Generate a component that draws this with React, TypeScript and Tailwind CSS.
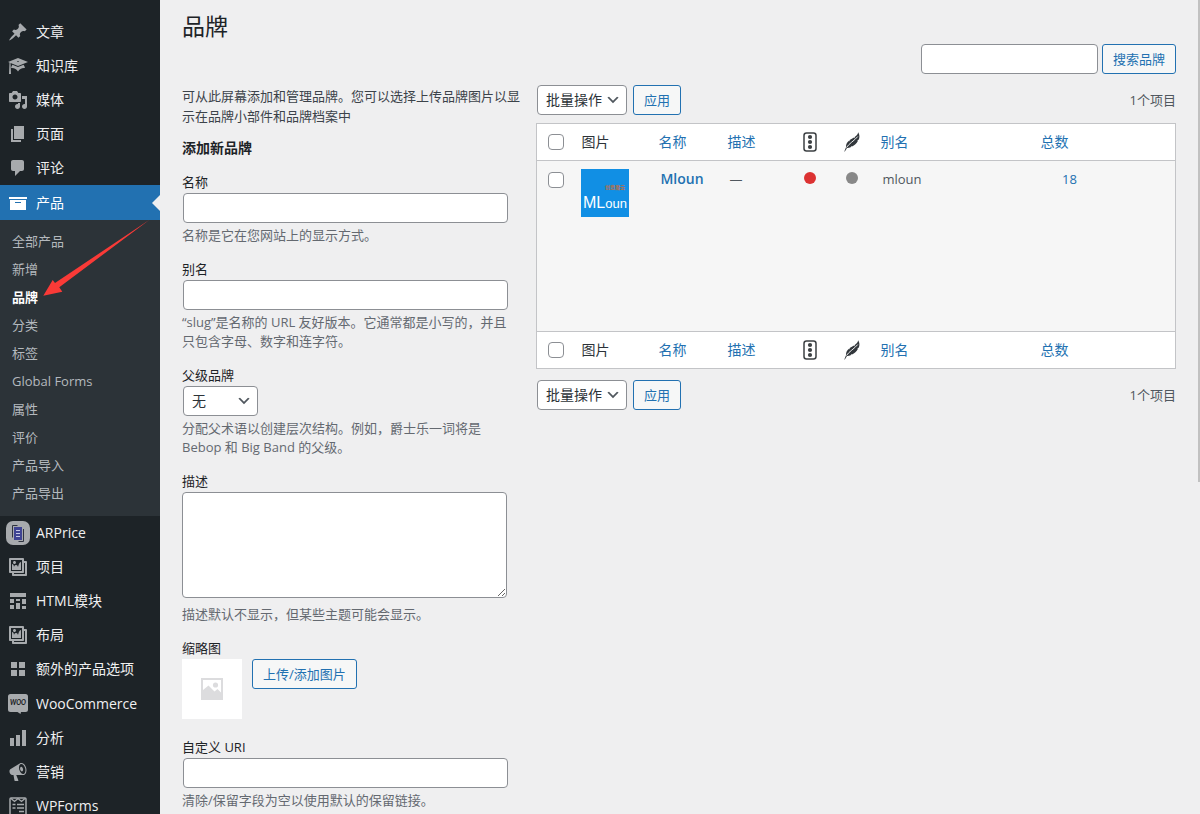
import React from "react";

const FONT = "font-['Open_Sans','Noto_Sans_CJK_SC',sans-serif]";

type Glyph = { d: string };

const Dash = ({ d }: Glyph) => (
  <svg viewBox="0 0 20 20" className="size-5 fill-current" aria-hidden="true">
    <path d={d} fillRule="evenodd" />
  </svg>
);

const GALLERY =
  "M16 4h1.96c.57 0 1.04.47 1.04 1.04v12.92c0 .57-.47 1.04-1.04 1.04H5.04C4.47 19 4 18.53 4 17.96V16H2.04C1.47 16 1 15.53 1 14.96V2.04C1 1.47 1.47 1 2.04 1h12.92c.57 0 1.04.47 1.04 1.04V4zM3 14h11V3H3v11zm5-8.5C8 4.67 7.33 4 6.5 4S5 4.67 5 5.5 5.67 7 6.5 7 8 6.33 8 5.5zm2 4.5s1-5 3-5v8H4V7c2 0 2 3 2 3s.33-2 2-2 2 2 2 2zm7 7V6h-1v8.960c0 .57-.47 1.04-1.04 1.04H6v1h11z";

const ArPriceIcon = () => (
  <svg viewBox="0 0 24 24" className="size-6" aria-hidden="true">
    <rect width="24" height="24" rx="7" fill="#a7aaad" />
    <path d="M6.500 16.500V4.500h5M17.500 8v12.500h-5" fill="none" stroke="#2f3440" strokeWidth="1" />
    <rect x="8" y="6" width="8" height="13" fill="#3f4493" />
    <path d="M10 9.500h4M10 12.500h4M10 15.500h4" stroke="#c5c8e6" strokeWidth="1" />
  </svg>
);

const WooIcon = () => (
  <svg viewBox="0 0 20 20" className="size-5" aria-hidden="true">
    <path d="M2.500 0h15A2.500 2.500 0 0 1 20 2.500v13a2.500 2.500 0 0 1-2.500 2.500H13l-.5 2-3-2h-7A2.500 2.500 0 0 1 0 15.500v-13A2.500 2.500 0 0 1 2.500 0z" fill="#a7aaad" />
    <text x="10" y="11" textAnchor="middle" fontSize="6.500" fontWeight="900" fontStyle="italic" fill="#1d2327" fontFamily="Lato, sans-serif">
      WOO
    </text>
  </svg>
);

const WpFormsIcon = () => (
  <svg viewBox="0 0 20 20" className="size-5" fill="none" stroke="currentColor" aria-hidden="true">
    <rect x="2" y="2" width="16" height="17" rx="1" strokeWidth="1.500" />
    <path d="M3 2.500l3.500 3L10 2.500l3.500 3 3.500-3" strokeWidth="1.300" />
    <path d="M4.500 8.500h3M9 8.500h7M4.500 12h3M9 12h7M11 15.500h5" strokeWidth="1.500" />
  </svg>
);

type Item = { label: string; icon: React.ReactNode };

const topItems: Item[] = [
  {
    label: "文章",
    icon: (
      <Dash d="M10.44 3.02l1.82-1.82 6.36 6.35-1.83 1.82c-1.05-.68-2.48-.57-3.41.36l-.75.75c-.92.93-1.04 2.35-.35 3.41l-1.83 1.82-2.41-2.41-2.8 2.79c-.42.42-3.38 2.71-3.8 2.29s1.86-3.39 2.28-3.81l2.79-2.79L4.1 9.36l1.83-1.82c1.05.69 2.48.57 3.4-.36l.75-.75c.93-.92 1.05-2.35.36-3.41z" />
    ),
  },
  {
    label: "知识库",
    icon: (
      <Dash d="M10 10L2.54 7.02 3 18H1l.48-11.41L0 6l10-4 10 4zm0-5c-.55 0-1 .22-1 .5s.45.5 1 .5 1-.22 1-.5-.45-.5-1-.5zm0 6l5.57-2.23c.71.94 1.2 2.07 1.36 3.3-.3-.04-.61-.07-.93-.07-2.55 0-4.78 1.37-6 3.41C8.78 13.37 6.55 12 4 12c-.32 0-.63.03-.93.07.16-1.23.65-2.36 1.36-3.3z" />
    ),
  },
  {
    label: "媒体",
    icon: (
      <Dash d="M13 11V4c0-.55-.45-1-1-1h-1.67L9 1H5L3.67 3H2c-.55 0-1 .45-1 1v7c0 .55.45 1 1 1h10c.55 0 1-.45 1-1zM7 4.5c1.38 0 2.5 1.12 2.5 2.5S8.38 9.5 7 9.5 4.5 8.38 4.5 7 5.62 4.5 7 4.5zM14 6h5v10.5c0 1.38-1.12 2.5-2.5 2.5S14 17.88 14 16.5s1.12-2.5 2.5-2.5c.17 0 .34.02.5.05V9h-3V6zm-4 8.05V13h2v3.5c0 1.38-1.12 2.5-2.5 2.5S7 17.88 7 16.5 8.12 14 9.5 14c.17 0 .34.02.5.05z" />
    ),
  },
  { label: "页面", icon: <Dash d="M6 15V2h10v13H6zm-1 1h8v2H3V5h2v11z" /> },
  {
    label: "评论",
    icon: <Dash d="M5 2h9c1.1 0 2 .9 2 2v7c0 1.1-.9 2-2 2h-2l-5 5v-5H5c-1.1 0-2-.9-2-2V4c0-1.1.9-2 2-2z" />,
  },
];

const subItems = ["全部产品", "新增", "品牌", "分类", "标签", "Global Forms", "属性", "评价", "产品导入", "产品导出"];

const pluginItems: Item[] = [
  { label: "ARPrice", icon: <ArPriceIcon /> },
  { label: "项目", icon: <Dash d={GALLERY} /> },
  {
    label: "HTML模块",
    icon: (
      <Dash d="M2 2h16v4H2V2zm0 10V8h4v4H2zm6-2V8h4v2H8zm6 3V8h4v5h-4zm-6 5v-6h4v6H8zm-6 0v-4h4v4H2zm12 0v-3h4v3h-4z" />
    ),
  },
  { label: "布局", icon: <Dash d={GALLERY} /> },
  { label: "额外的产品选项", icon: <Dash d="M3 3h6v6H3zM11 3h6v6h-6zM3 11h6v6H3zM11 11h6v6h-6z" /> },
];

const shopItems: Item[] = [
  { label: "WooCommerce", icon: <WooIcon /> },
  { label: "分析", icon: <Dash d="M18 18V2h-4v16h4zm-6 0V7H8v11h4zm-6 0v-8H2v8h4z" /> },
  {
    label: "营销",
    icon: (
      <Dash d="M18.15 5.94c.46 1.62.38 3.22-.02 4.48-.42 1.28-1.26 2.18-2.3 2.48-.16.06-.26.06-.4.06-.06.02-.12.02-.18.02-.06.02-.14.02-.22.02h-6.8l2.22 5.5c.02.14-.06.26-.14.34-.08.1-.24.16-.34.16H6.95c-.1 0-.26-.06-.34-.16-.08-.08-.16-.2-.14-.34l-1-5.5H4.25l-.02-.02c-.5.06-1.08-.18-1.54-.62s-.88-1.08-1.06-1.88c-.24-.8-.2-1.56-.02-2.2.18-.62.58-1.08 1.06-1.3l.02-.02 9-5.4c.1-.06.18-.1.24-.16.06-.04.14-.08.24-.12.16-.08.28-.12.5-.18 1.04-.3 2.24.1 3.22.98s1.84 2.24 2.26 3.86zm-2.58 5.98h-.02c.4-.1.74-.34 1.04-.7.58-.7.86-1.76.86-3.04 0-.64-.1-1.3-.28-1.98-.34-1.36-1.02-2.5-1.78-3.24s-1.68-1.1-2.46-.88c-.82.22-1.4.96-1.7 2-.32 1.04-.28 2.36.06 3.72.38 1.36 1 2.5 1.8 3.24.78.74 1.62 1.1 2.48.88zm-2.54-7.08c.22-.04.42-.02.62.04.38.16.76.48 1.02 1s.42 1.2.42 1.78c0 .3-.04.56-.12.8-.18.48-.44.84-.86.94-.34.1-.8-.06-1.14-.4s-.64-.86-.78-1.5c-.18-.62-.12-1.24.02-1.72s.48-.84.82-.94z" />
    ),
  },
  { label: "WPForms", icon: <WpFormsIcon /> },
];

const MenuGroup = ({ items }: { items: Item[] }) => (
  <ul>
    {items.map((it) => (
      <li key={it.label}>
        <a href="#" className="flex h-[34px] items-center text-sm text-[#f0f0f1]">
          <span className="flex w-9 shrink-0 items-center justify-center text-[#a7aaad]">{it.icon}</span>
          {it.label}
        </a>
      </li>
    ))}
  </ul>
);

const Sidebar = () => (
  <nav aria-label="主菜单" className="relative w-40 shrink-0 bg-[#1d2327] pt-[15px]">
    <MenuGroup items={topItems} />
    <a href="#" className="relative flex h-[35px] items-center bg-[#2271b1] text-sm text-white">
      <span className="flex w-9 shrink-0 justify-center">
        <Dash d="M19 4v2H1V4h18zM2 7h16v10H2V7zm11 3V9H7v1h6z" />
      </span>
      产品
      <span className="absolute top-1/2 right-0 -translate-y-1/2 border-y-8 border-r-8 border-y-transparent border-r-[#efeff0]" />
    </a>
    <ul className="bg-[#2c3338] pt-[7px] pb-[9px]">
      {subItems.map((s) => (
        <li key={s}>
          <a
            href="#"
            className={
              s === "品牌"
                ? "flex h-7 items-center px-3 text-[13px] font-bold text-white"
                : "flex h-7 items-center px-3 text-[13px] text-[#b4b9be]"
            }
          >
            {s}
          </a>
        </li>
      ))}
    </ul>
    <div className="flex flex-col gap-px">
      <MenuGroup items={pluginItems} />
      <MenuGroup items={shopItems} />
    </div>
    <svg viewBox="0 0 112 80" className="pointer-events-none absolute top-[219px] left-[42px] h-20 w-28" aria-hidden="true">
      <path d="M107.500.7L13 64l-2.300-3L1.300 76.700l19-4-3-4.400z" fill="#f93a37" />
    </svg>
  </nav>
);

const Chevron = () => (
  <svg viewBox="0 0 20 20" className="pointer-events-none absolute top-1/2 right-1.5 size-4 -translate-y-1/2" aria-hidden="true">
    <path d="M5 6l5 5 5-5 2 1-7 7-7-7 2-1z" fill="#50575e" />
  </svg>
);

const inputCls = "h-[30px] rounded border border-[#8c8f94] bg-white px-2 text-sm text-[#2c3338]";
const buttonCls =
  "h-[30px] rounded-[3px] border border-[#2271b1] bg-[#f6f7f7] px-2.5 text-[13px] whitespace-nowrap text-[#2271b1]";
const selectCls =
  "h-[30px] w-full appearance-none rounded border border-[#8c8f94] bg-white pr-6 pl-2 text-sm text-[#2c3338]";
const checkCls = "block size-4 appearance-none rounded border border-[#8c8f94] bg-white";

const Field = ({ id, label, help, children }: { id: string; label: string; help?: string; children: React.ReactNode }) => (
  <div>
    <label htmlFor={id} className="block leading-[22px] text-[#1d2327]">
      {label}
    </label>
    {children}
    {help && <p className="w-[96%] pt-[3px] leading-[19px] text-[#646970]">{help}</p>}
  </div>
);

const BulkBar = ({ id }: { id: string }) => (
  <div className="flex items-center gap-1.5 pl-px">
    <div className="relative w-[90px]">
      <select id={id} aria-label="选择批量操作" className={selectCls}>
        <option>批量操作</option>
      </select>
      <Chevron />
    </div>
    <button className={buttonCls}>应用</button>
    <span className="ml-auto text-[#50575e]">1个项目</span>
  </div>
);

const HandleIcon = () => (
  <svg viewBox="0 0 14 20" className="mx-auto h-5 w-3.5" aria-label="SEO" role="img">
    <rect x="1" y="1" width="12" height="18" rx="2.500" fill="none" stroke="#3c4043" strokeWidth="1.500" />
    <circle cx="7" cy="5" r="2.100" fill="#3c4043" />
    <circle cx="7" cy="10" r="2.100" fill="#3c4043" />
    <circle cx="7" cy="15" r="2.100" fill="#3c4043" />
  </svg>
);

const FeatherIcon = () => (
  <svg viewBox="0 0 16 20" className="mx-auto h-5 w-4" aria-label="可读性" role="img">
    <path d="M14.200.3C15.800 3 15.700 5.500 14.700 7.700L13.200 8.200l.8.600C12.500 11.500 10.500 13.500 8 14.500L6.800 14.100l.4.900C5.800 15.600 4.300 15.900 3 16L.7 19.700.4 19.300 2 15.200C1.800 12.500 3 10.200 5 8.700l.5.900.2-1.500L10 5.500l.6.900.1-1.400C12.500 3.800 13.800 2.300 14.200.3z" fill="#32373c" />
    <path d="M2.500 15.500C5 11.500 10 9 13.800 4.500" fill="none" stroke="#fff" strokeWidth=".9" />
  </svg>
);

const HeaderRow = ({ id }: { id: string }) => (
  <tr className="h-[37px] bg-white text-left text-sm">
    <th className="pl-[11px]">
      <input id={id} type="checkbox" aria-label="全选" className={checkCls} />
    </th>
    <th className="px-2.5 font-normal text-[#2c3338]">图片</th>
    <th className="px-2 font-normal"><a href="#" className="text-[#2271b1]">名称</a></th>
    <th className="px-2 font-normal"><a href="#" className="text-[#2271b1]">描述</a></th>
    <th><HandleIcon /></th>
    <th><FeatherIcon /></th>
    <th className="px-2 font-normal"><a href="#" className="text-[#2271b1]">别名</a></th>
    <th className="px-2 font-normal"><a href="#" className="text-[#2271b1]">总数</a></th>
    <th />
  </tr>
);

const BrandLogo = () => (
  <svg viewBox="0 0 48 48" className="size-12" role="img" aria-label="MLoun">
    <rect width="48" height="48" fill="#118fe4" />
    <text x="24" y="20" fontSize="5" fontWeight="700" fill="#b5704a" fontFamily="Noto Sans CJK SC, sans-serif">创意魔云</text>
    <text x="2" y="39" fontSize="16" fill="#fff" fontFamily="Liberation Sans, sans-serif">
      ML<tspan fontSize="13">oun</tspan>
    </text>
  </svg>
);

const BrandTable = () => (
  <table className="mt-2 mb-[11px] w-full table-fixed border border-[#c3c4c7] bg-[#f6f6f6]">
    <colgroup>
      <col className="w-[35px]" />
      <col className="w-[79px]" />
      <col className="w-[69px]" />
      <col className="w-[70px]" />
      <col className="w-[42px]" />
      <col className="w-[41px]" />
      <col />
      <col className="w-[74px]" />
      <col className="w-[69px]" />
    </colgroup>
    <thead className="border-b border-[#c3c4c7]">
      <HeaderRow id="all-top" />
    </thead>
    <tbody>
      <tr className="h-[171px] align-top text-[#50575e]">
        <td className="pt-[11px] pl-[11px]">
          <input type="checkbox" aria-label="选择 Mloun" className={checkCls} />
        </td>
        <td className="px-2.5 pt-2"><BrandLogo /></td>
        <td className="px-2.5 pt-2 text-sm font-semibold"><a href="#" className="text-[#2271b1]">Mloun</a></td>
        <td className="px-2.5 pt-2">—</td>
        <td className="pt-[11px]"><span className="mx-auto block size-3 rounded-full bg-[#dc3232]" /></td>
        <td className="pt-[11px]"><span className="mx-auto block size-3 rounded-full bg-[#888]" /></td>
        <td className="px-2.5 pt-2">mloun</td>
        <td className="pt-2 text-center"><a href="#" className="text-[#2271b1]">18</a></td>
        <td />
      </tr>
    </tbody>
    <tfoot className="border-t border-[#c3c4c7]">
      <HeaderRow id="all-bottom" />
    </tfoot>
  </table>
);

const AddForm = () => (
  <div className="w-[35%] shrink-0 pt-px pr-1.5">
    <p className="leading-5 text-[#3c434a]">可从此屏幕添加和管理品牌。您可以选择上传品牌图片以显示在品牌小部件和品牌档案中</p>
    <h2 className="pt-3 text-sm leading-5 font-semibold text-[#1d2327]">添加新品牌</h2>
    <form className="flex flex-col gap-[13px] pt-[13px]">
      <Field id="name" label="名称" help="名称是它在您网站上的显示方式。">
        <input id="name" type="text" className={`${inputCls} mx-px block w-[95%]`} />
      </Field>
      <Field id="slug" label="别名" help="“slug”是名称的 URL 友好版本。它通常都是小写的，并且只包含字母、数字和连字符。">
        <input id="slug" type="text" className={`${inputCls} mx-px block w-[95%]`} />
      </Field>
      <Field id="parent" label="父级品牌" help="分配父术语以创建层次结构。例如，爵士乐一词将是 Bebop 和 Big Band 的父级。">
        <div className="relative mx-px w-[75px]">
          <select id="parent" className={selectCls}>
            <option>无</option>
          </select>
          <Chevron />
        </div>
      </Field>
      <Field id="desc" label="描述" help="描述默认不显示，但某些主题可能会显示。">
        <textarea id="desc" className="mb-1 block h-[106px] w-[95%] rounded border border-[#8c8f94] bg-white px-2 py-1" />
      </Field>
      <Field id="thumb" label="缩略图">
        <div className="flex items-start gap-2.5 pb-1">
          <div className="flex size-15 items-center justify-center bg-white">
            <svg viewBox="0 0 22 22" className="size-[22px]" aria-hidden="true">
              <path d="M0 0h22v22H0z" fill="#dcdcde" />
              <path d="M2 2h18v12.500l-3.500-3.500-3 2.500L7.500 7.500 2 12z" fill="#fff" />
              <circle cx="14.500" cy="7" r="2.600" fill="#dcdcde" />
            </svg>
          </div>
          <button id="thumb" type="button" className={buttonCls}>上传/添加图片</button>
        </div>
      </Field>
      <Field id="uri" label="自定义 URI" help="清除/保留字段为空以使用默认的保留链接。">
        <input id="uri" type="text" className={`${inputCls} mx-px block w-[95%]`} />
      </Field>
    </form>
  </div>
);

export default function App() {
  return (
    <div className={`relative flex h-screen overflow-hidden bg-[#efeff0] text-[13px] leading-5 text-[#3c434a] ${FONT}`}>
      <Sidebar />
      <main className="min-w-0 flex-1 pr-6 pl-[22px]">
        <h1 className="pt-2.5 pb-0.5 text-[23px] leading-8 text-[#1d2327]">品牌</h1>
        <div className="flex justify-end gap-1">
          <input type="search" aria-label="搜索品牌" className={`${inputCls} w-[177px]`} />
          <button className={buttonCls}>搜索品牌</button>
        </div>
        <div className="flex pt-[11px]">
          <AddForm />
          <div className="min-w-0 flex-1 pl-1.5">
            <BulkBar id="bulk-top" />
            <BrandTable />
            <BulkBar id="bulk-bottom" />
          </div>
        </div>
      </main>
      <div className="absolute top-0 right-0 h-[482px] w-0.5 bg-[#c1c1c1]" />
    </div>
  );
}
